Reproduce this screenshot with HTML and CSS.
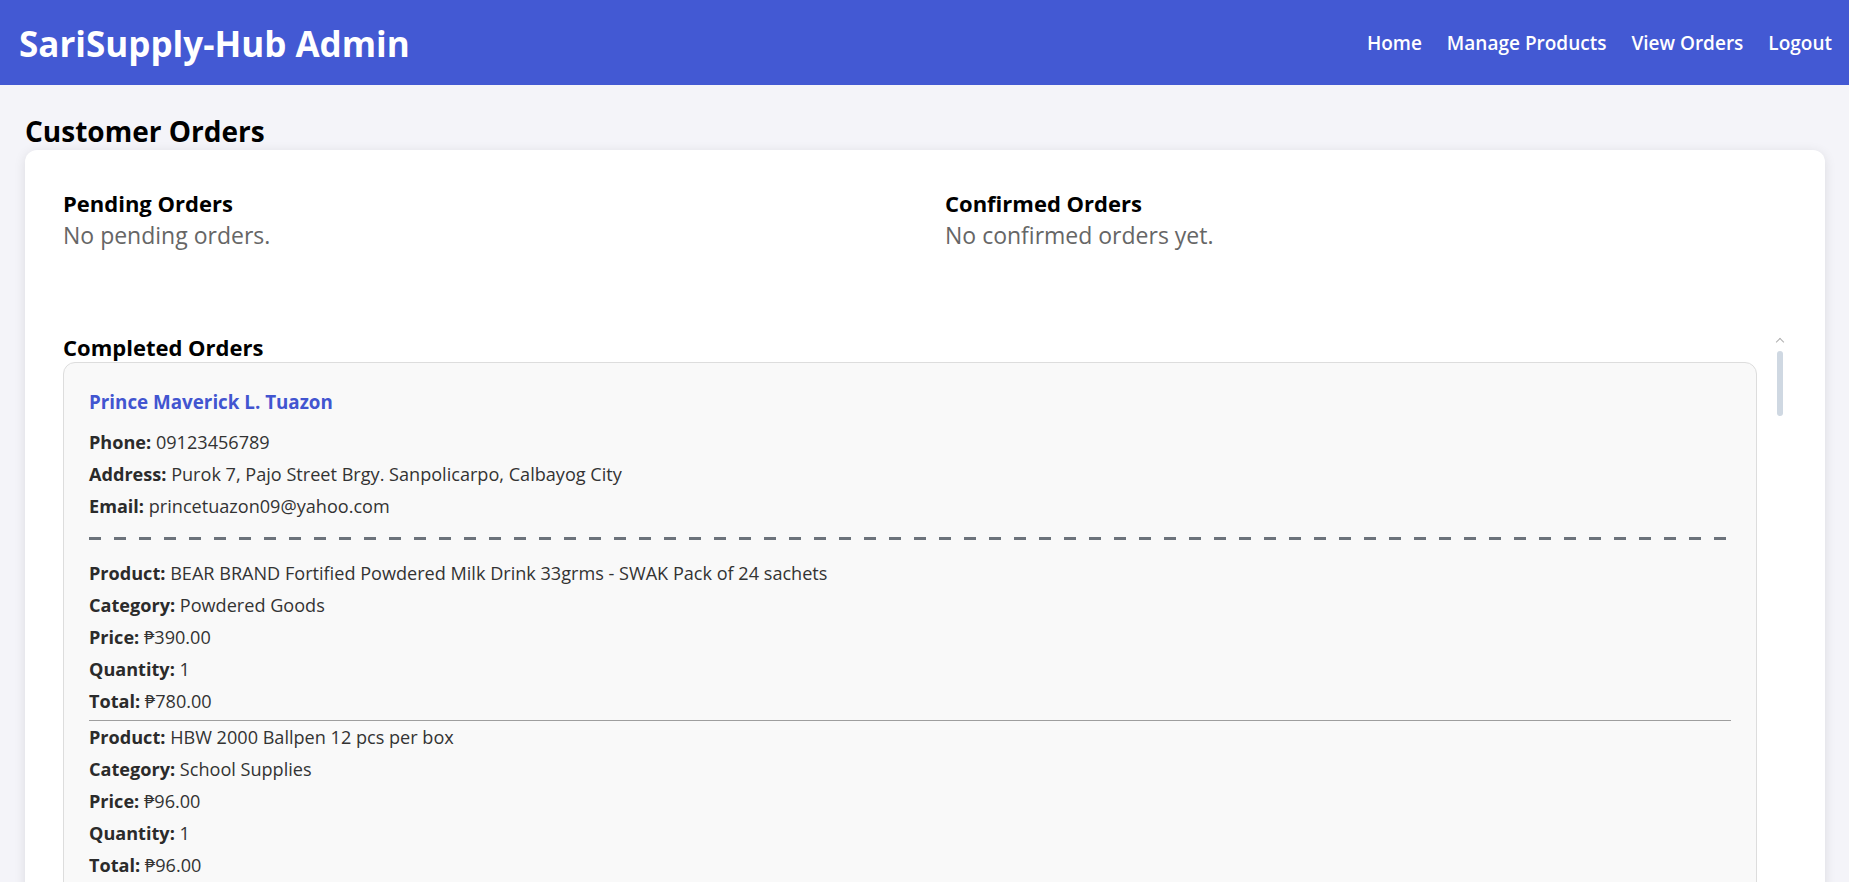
FILE: index.html
```html
<!DOCTYPE html>
<html lang="en">
<head>
<meta charset="utf-8">
<title>SariSupply-Hub Admin - Orders</title>
<link rel="stylesheet" href="styles.css">
</head>
<body>
<header class="topbar">
  <h1 class="brand">SariSupply-Hub Admin</h1>
  <nav class="nav">
    <a href="#" class="nav-link">Home</a>
    <a href="#" class="nav-link">Manage Products</a>
    <a href="#" class="nav-link">View Orders</a>
    <a href="#" class="nav-link">Logout</a>
  </nav>
</header>

<main class="main">
  <h2 class="page-title">Customer Orders</h2>
  <section class="panel">
    <div class="columns">
      <div class="column">
        <h3 class="section-title">Pending Orders</h3>
        <p class="empty">No pending orders.</p>
      </div>
      <div class="column">
        <h3 class="section-title">Confirmed Orders</h3>
        <p class="empty">No confirmed orders yet.</p>
      </div>
    </div>

    <div class="completed">
      <h3 class="section-title">Completed Orders</h3>
      <article class="order">
        <h4 class="customer">Prince Maverick L. Tuazon</h4>
        <p class="row"><b>Phone:</b> 09123456789</p>
        <p class="row"><b>Address:</b> Purok 7, Pajo Street Brgy. Sanpolicarpo, Calbayog City</p>
        <p class="row"><b>Email:</b> princetuazon09@yahoo.com</p>
        <div class="dashed"></div>
        <div class="item">
          <p class="row"><b>Product:</b> BEAR BRAND Fortified Powdered Milk Drink 33grms - SWAK Pack of 24 sachets</p>
          <p class="row"><b>Category:</b> Powdered Goods</p>
          <p class="row"><b>Price:</b> ₱390.00</p>
          <p class="row"><b>Quantity:</b> 1</p>
          <p class="row"><b>Total:</b> ₱780.00</p>
        </div>
        <div class="item">
          <p class="row"><b>Product:</b> HBW 2000 Ballpen 12 pcs per box</p>
          <p class="row"><b>Category:</b> School Supplies</p>
          <p class="row"><b>Price:</b> ₱96.00</p>
          <p class="row"><b>Quantity:</b> 1</p>
          <p class="row"><b>Total:</b> ₱96.00</p>
        </div>
      </article>
      <div class="scrollbar" aria-hidden="true">
        <span class="scroll-arrow"></span>
        <span class="scroll-thumb"></span>
      </div>
    </div>
  </section>
</main>
</body>
</html>
```
FILE: styles.css
```css
html, body {
  height: 100%;
}

body {
  margin: 0;
  overflow: hidden;
  background: #f4f4f9;
  font-family: "Open Sans", "Noto Sans", sans-serif;
  color: #333;
}

.topbar {
  height: 85px;
  box-sizing: border-box;
  padding: 1px 17px 0 19px;
  background: #4359d3;
  display: flex;
  align-items: center;
  justify-content: space-between;
}

.brand {
  margin: 0;
  font-size: 35px;
  font-weight: 700;
  color: #fff;
}

.nav {
  display: flex;
  gap: 25px;
}

.nav-link {
  color: #fff;
  text-decoration: none;
  font-size: 19px;
  font-weight: 600;
}

.main {
  padding: 27px 24px 0 25px;
}

.page-title {
  margin: 0;
  font-size: 28px;
  font-weight: 700;
  color: #000;
}

.panel {
  background: #fff;
  border-radius: 12px;
  box-shadow: 0 2px 12px rgba(0, 0, 0, 0.1);
  padding: 38px 38px 38px 38px;
}

.columns {
  display: grid;
  grid-template-columns: 1fr 1fr;
  gap: 40px;
  margin-bottom: 81px;
}

.section-title {
  margin: 0;
  font-size: 22px;
  font-weight: 700;
  color: #000;
}

.empty {
  margin: 1px 0 0 0;
  font-size: 23px;
  color: #666;
}

.completed {
  position: relative;
  padding-right: 30px;
}

.order {
  background: #f9f9f9;
  border: 1px solid #ddd;
  border-radius: 12px;
  padding: 27px 25px 25px 25px;
}

.customer {
  margin: 0 0 11px 0;
  font-size: 18.8px;
  line-height: 25px;
  font-weight: 700;
  color: #4255d0;
}

.row {
  margin: 0;
  font-size: 18.1px;
  line-height: 32px;
  color: #333;
}

.row b {
  font-weight: 700;
  color: #2b2b2b;
}

.dashed {
  height: 3px;
  margin: 15px 0 17px 0;
  background: repeating-linear-gradient(to right, #6c737b 0 12px, transparent 12px 25px);
}

.item {
  padding-bottom: 3px;
  border-bottom: 1px solid #9e9e9e;
}

.scrollbar {
  position: absolute;
  top: 5px;
  right: 3px;
  width: 8px;
  display: flex;
  flex-direction: column;
  align-items: center;
  gap: 6px;
}

.scroll-arrow {
  width: 5px;
  height: 5px;
  border-left: 1.5px solid #b0b0b0;
  border-top: 1.5px solid #b0b0b0;
  transform: rotate(45deg);
  margin-top: 2px;
}

.scroll-thumb {
  width: 6px;
  height: 65px;
  border-radius: 3px;
  background: #cfd8e2;
}
```
